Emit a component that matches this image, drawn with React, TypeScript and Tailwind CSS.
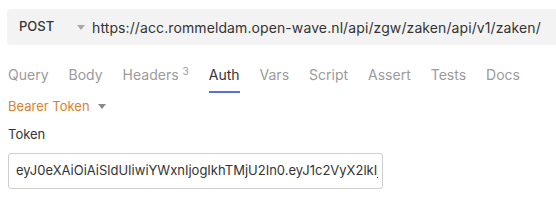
const tabs = [
  { label: "Query" },
  { label: "Body" },
  { label: "Headers", count: 3 },
  { label: "Auth", active: true },
  { label: "Vars" },
  { label: "Script" },
  { label: "Assert" },
  { label: "Tests" },
  { label: "Docs" },
];

function Caret({ className }: { className?: string }) {
  return (
    <svg width="8" height="5" viewBox="0 0 8 5" className={className}>
      <path d="M0 0h8L4 5z" fill="currentColor" />
    </svg>
  );
}

export default function App() {
  return (
    <div className="w-[556px] h-[209px] bg-white font-['Inter',sans-serif] overflow-hidden">
      {/* URL bar */}
      <div className="pt-[9px] pl-[7px]">
        <div className="flex items-center h-[36px] bg-[#f3f3f3] rounded-l-[4px]">
          <span className="pl-[12px] w-[60px] text-[13px] font-medium text-[#343434]">POST</span>
          <Caret className="text-[#a8a8a8] ml-[10px]" />
          <span className="ml-[7px] text-[14px] tracking-[0.1px] text-[#343434] whitespace-nowrap">
            https://acc.rommeldam.open-wave.nl/api/zgw/zaken/api/v1/zaken/
          </span>
        </div>
      </div>

      {/* Tabs */}
      <div className="flex items-start gap-[20px] px-[8px] mt-[20px] h-[30px]">
        {tabs.map((t) => (
          <div key={t.label} className="flex flex-col items-center">
            <span
              className={
                t.active
                  ? "text-[14px] leading-[20px] text-[#343434]"
                  : "text-[14px] leading-[20px] text-[#9b9b9b]"
              }
            >
              {t.label}
              {t.count && <sup className="ml-[4px] text-[10px] -top-[5px]">{t.count}</sup>}
            </span>
            {t.active && <div className="mt-[6px] h-[2px] w-full bg-[#5b6de0]" />}
          </div>
        ))}
      </div>

      {/* Auth mode */}
      <div className="flex items-center gap-[8px] px-[8px] mt-[2px]">
        <span className="text-[13px] text-[#d9822b]">Bearer Token</span>
        <Caret className="text-[#8a8a8a]" />
      </div>

      <div className="px-[8px] mt-[8px] text-[13px] text-[#343434]">Token</div>

      <div className="px-[8px] mt-[9px]">
        <div className="w-[375px] h-[36px] border border-[#cfcfcf] rounded-[3px] flex items-center pl-[7px] pr-[4px] overflow-hidden">
          <span className="text-[13px] text-[#343434] whitespace-nowrap overflow-hidden">
            eyJ0eXAiOiAiSldUIiwiYWxnIjogIkhTMjU2In0.eyJ1c2VyX2lkIjoiMTIzNCJ9
          </span>
        </div>
      </div>
    </div>
  );
}
